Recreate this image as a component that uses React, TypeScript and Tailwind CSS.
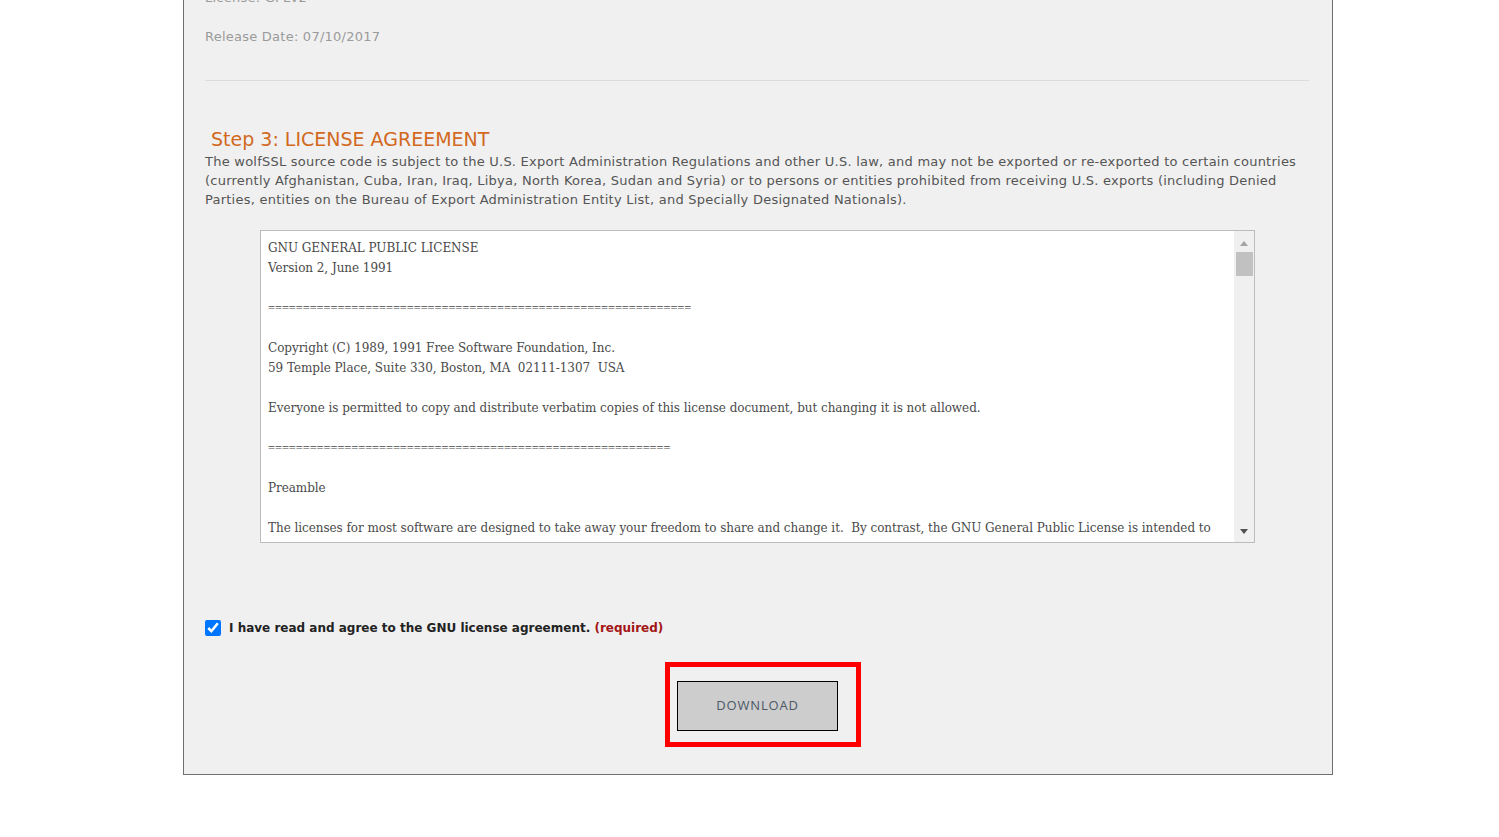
export default function App() {
  const verdana = { fontFamily: '"DejaVu Sans", Verdana, sans-serif' };
  const eq = { fontFamily: '"Liberation Serif", serif', fontSize: '12.4px' };
  return (
    <div className="min-h-[837px] bg-white overflow-hidden">
      <div
        className="ml-[183px] w-[1150px] border-x border-b border-[#6e6e6e] bg-[#f0f0f0] px-[21px] pb-[27px] -mt-[22px] tracking-[0.24px]"
        style={verdana}
      >
        <p className="text-[13px] leading-[38px] text-[#9a9a9a] pt-[1px]">License: GPLv2</p>
        <p className="text-[13px] leading-[20px] text-[#9a9a9a] mt-[10px]">Release Date: 07/10/2017</p>
        <div className="mt-[33px] mr-[2px] h-px bg-[#dcdcdc]" />

        <h2 className="mt-[46px] ml-[6px] text-[19px] leading-[24px] tracking-normal text-[#d2691e]">
          Step 3: LICENSE AGREEMENT
        </h2>
        <p className="text-[13px] leading-[19px] text-[#555555] mt-[1px] pr-[6px]">
          The wolfSSL source code is subject to the U.S. Export Administration Regulations and other U.S. law, and may not be exported or re-exported to certain countries (currently Afghanistan, Cuba, Iran, Iraq, Libya, North Korea, Sudan and Syria) or to persons or entities prohibited from receiving U.S. exports (including Denied Parties, entities on the Bureau of Export Administration Entity List, and Specially Designated Nationals).
        </p>

        <div className="mt-[21px] ml-[55px] flex h-[313px] w-[995px] border border-[#bcbcbc] bg-white tracking-normal">
          <div
            className="flex-1 overflow-hidden pl-[7px] pt-[7px] text-[12px] leading-[20px] tracking-[-0.05px] text-[#4a4a4a] whitespace-pre"
            style={{ fontFamily: '"DejaVu Serif", "Liberation Serif", serif' }}
          >
            {'GNU GENERAL PUBLIC LICENSE\nVersion 2, June 1991\n\n'}
            <span style={eq}>{'=============================================================\n'}</span>
            {'\nCopyright (C) 1989, 1991 Free Software Foundation, Inc.\n59 Temple Place, Suite 330, Boston, MA  02111-1307  USA\n\nEveryone is permitted to copy and distribute verbatim copies of this license document, but changing it is not allowed.\n\n'}
            <span style={eq}>{'==========================================================\n'}</span>
            {'\nPreamble\n\nThe licenses for most software are designed to take away your freedom to share and change it.  By contrast, the GNU General Public License is intended to'}
          </div>
          <div className="flex w-[20px] flex-col items-center bg-[#f0f0f0]">
            <div className="mt-[10px] h-0 w-0 border-x-[4px] border-b-[5px] border-x-transparent border-b-[#a3a3a3]" />
            <div className="mt-[6px] h-[24px] w-[17px] bg-[#c1c1c1]" />
            <div className="flex-1" />
            <div className="mb-[8px] h-0 w-0 border-x-[4px] border-t-[5px] border-x-transparent border-t-[#505050]" />
          </div>
        </div>

        <label className="mt-[76px] flex items-center gap-[8px] text-[12px] font-bold tracking-normal text-[#222222]">
          <input type="checkbox" defaultChecked className="h-[16px] w-[16px] accent-[#0075ff]" />
          <span>
            I have read and agree to the GNU license agreement. <span className="text-[#a31515]">(required)</span>
          </span>
        </label>

        <div className="mt-[25px] flex justify-center">
          <div className="ml-[10px] border-[5px] border-[#ff0000] pl-[7px] pr-[18px] pt-[14px] pb-[11px]">
            <button
              className="h-[50px] w-[161px] border border-black bg-[#cdcdcd] text-[13px] tracking-[0.8px] text-[#4c5866]"
              style={{ fontFamily: '"Open Sans", "Liberation Sans", sans-serif' }}
            >
              DOWNLOAD
            </button>
          </div>
        </div>
      </div>
    </div>
  );
}
